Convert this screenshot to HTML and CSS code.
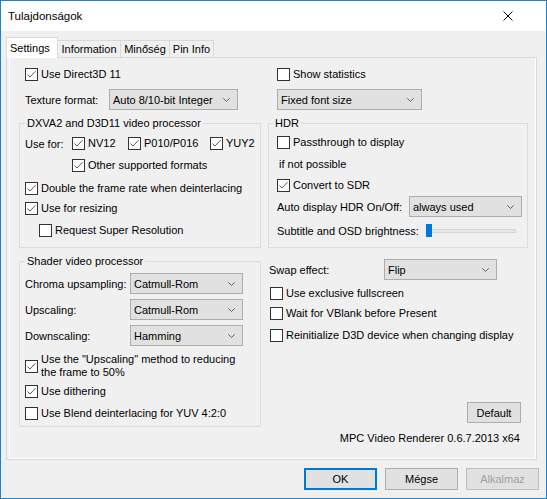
FILE: index.html
```html
<!DOCTYPE html>
<html>
<head>
<meta charset="utf-8">
<link rel="stylesheet" href="styles.css">
</head>
<body>
<div class="win">
  <div class="titlebar">
    <span class="title">Tulajdonságok</span>
    <svg class="close" width="10" height="10" viewBox="0 0 10 10"><path d="M0.5 0.5 L9.5 9.5 M9.5 0.5 L0.5 9.5" stroke="#000" stroke-width="1" fill="none"/></svg>
  </div>
  <div class="client">
    <div class="tabs">
      <div class="tab sel t1">Settings</div>
      <div class="tab t2">Information</div>
      <div class="tab t3">Minőség</div>
      <div class="tab t4">Pin Info</div>
    </div>
    <div class="panel">
      <div class="col left">
        <label class="chk r-d3d"><span class="cb on"><svg viewBox="0 0 11 11"><path d="M1.5 5.5 L4 8 L9.5 2.2"/></svg></span>Use Direct3D 11</label>
        <div class="frow r-tex"><span class="lbl w-tex">Texture format:</span><div class="sel w129">Auto 8/10-bit Integer<svg viewBox="0 0 7 4"><path d="M0.3 0.3 L3.5 3.5 L6.7 0.3"/></svg></div></div>
        <fieldset class="grp g-dxva">
          <legend>DXVA2 and D3D11 video processor</legend>
          <div class="usefor">
            <span class="lbl w-use">Use for:</span>
            <label class="chk i-nv"><span class="cb on"><svg viewBox="0 0 11 11"><path d="M1.5 5.5 L4 8 L9.5 2.2"/></svg></span>NV12</label>
            <label class="chk i-p10"><span class="cb on"><svg viewBox="0 0 11 11"><path d="M1.5 5.5 L4 8 L9.5 2.2"/></svg></span>P010/P016</label>
            <label class="chk"><span class="cb on"><svg viewBox="0 0 11 11"><path d="M1.5 5.5 L4 8 L9.5 2.2"/></svg></span>YUY2</label>
          </div>
          <label class="chk r-other"><span class="cb on"><svg viewBox="0 0 11 11"><path d="M1.5 5.5 L4 8 L9.5 2.2"/></svg></span>Other supported formats</label>
          <label class="chk r-double"><span class="cb on"><svg viewBox="0 0 11 11"><path d="M1.5 5.5 L4 8 L9.5 2.2"/></svg></span>Double the frame rate when deinterlacing</label>
          <label class="chk r-resize"><span class="cb on"><svg viewBox="0 0 11 11"><path d="M1.5 5.5 L4 8 L9.5 2.2"/></svg></span>Use for resizing</label>
          <label class="chk r-super"><span class="cb"></span>Request Super Resolution</label>
        </fieldset>
        <fieldset class="grp g-shader">
          <legend>Shader video processor</legend>
          <div class="frow r-chroma"><span class="lbl w-sh">Chroma upsampling:</span><div class="sel w113">Catmull-Rom<svg viewBox="0 0 7 4"><path d="M0.3 0.3 L3.5 3.5 L6.7 0.3"/></svg></div></div>
          <div class="frow r-up"><span class="lbl w-sh">Upscaling:</span><div class="sel w113">Catmull-Rom<svg viewBox="0 0 7 4"><path d="M0.3 0.3 L3.5 3.5 L6.7 0.3"/></svg></div></div>
          <div class="frow r-up"><span class="lbl w-sh">Downscaling:</span><div class="sel w113">Hamming<svg viewBox="0 0 7 4"><path d="M0.3 0.3 L3.5 3.5 L6.7 0.3"/></svg></div></div>
          <label class="chk two r-half"><span class="cb on"><svg viewBox="0 0 11 11"><path d="M1.5 5.5 L4 8 L9.5 2.2"/></svg></span><span>Use the "Upscaling" method to reducing<br>the frame to 50%</span></label>
          <label class="chk r-dither"><span class="cb on"><svg viewBox="0 0 11 11"><path d="M1.5 5.5 L4 8 L9.5 2.2"/></svg></span>Use dithering</label>
          <label class="chk r-blend"><span class="cb"></span>Use Blend deinterlacing for YUV 4:2:0</label>
        </fieldset>
      </div>
      <div class="col right">
        <label class="chk r-stats"><span class="cb"></span>Show statistics</label>
        <div class="sel w145 r-font">Fixed font size<svg viewBox="0 0 7 4"><path d="M0.3 0.3 L3.5 3.5 L6.7 0.3"/></svg></div>
        <fieldset class="grp g-hdr">
          <legend>HDR</legend>
          <label class="chk r-pass"><span class="cb"></span>Passthrough to display</label>
          <div class="txt r-ifnot">if not possible</div>
          <label class="chk r-sdr"><span class="cb on"><svg viewBox="0 0 11 11"><path d="M1.5 5.5 L4 8 L9.5 2.2"/></svg></span>Convert to SDR</label>
          <div class="frow r-auto"><span class="lbl w-auto">Auto display HDR On/Off:</span><div class="sel w113">always used<svg viewBox="0 0 7 4"><path d="M0.3 0.3 L3.5 3.5 L6.7 0.3"/></svg></div></div>
          <div class="srow r-osd"><span class="lbl w-osd">Subtitle and OSD brightness:</span><div class="slider"><span class="thumb"></span><span class="track"></span></div></div>
        </fieldset>
        <div class="frow r-swap"><span class="lbl w-swap">Swap effect:</span><div class="sel w113">Flip<svg viewBox="0 0 7 4"><path d="M0.3 0.3 L3.5 3.5 L6.7 0.3"/></svg></div></div>
        <label class="chk r-excl"><span class="cb"></span>Use exclusive fullscreen</label>
        <label class="chk r-vbl"><span class="cb"></span>Wait for VBlank before Present</label>
        <label class="chk r-reinit"><span class="cb"></span>Reinitialize D3D device when changing display</label>
        <div class="btn b-default">Default</div>
        <div class="version">MPC Video Renderer 0.6.7.2013 x64</div>
      </div>
    </div>
    <div class="buttons">
      <div class="btn dlg ok">OK</div>
      <div class="btn dlg">Mégse</div>
      <div class="btn dlg dis">Alkalmaz</div>
    </div>
  </div>
</div>
</body>
</html>
```
FILE: styles.css
```css
* { box-sizing: border-box; }
html, body { margin: 0; padding: 0; }
body {
  font-family: "Liberation Sans", Arial, sans-serif;
  font-size: 11px;
  color: #000;
  background: #f0f0f0;
}
.win {
  width: 547px;
  height: 499px;
  border: 1px solid #1883d7;
  background: #f0f0f0;
  overflow: hidden;
}
.titlebar {
  height: 30px;
  background: #fff;
  display: flex;
  align-items: center;
  justify-content: space-between;
  padding: 0 33px 0 7px;
}
.title { font-size: 11.5px; }
.close { display: block; }

.client { padding: 6px 10px 0 5px; }

.tabs {
  display: flex;
  align-items: flex-end;
  height: 20px;
}
.tab {
  height: 17px;
  line-height: 16px;
  text-align: center;
  border-top: 1px solid #d9d9d9;
  border-right: 1px solid #d9d9d9;
  background: #f0f0f0;
}
.tab.sel {
  height: 21px;
  line-height: 18px;
  border: 1px solid #d9d9d9;
  border-bottom: none;
  background: #fff;
  margin-bottom: -1px;
  position: relative;
  z-index: 1;
}
.t1 { width: 52px; }
.t2 { width: 63px; }
.t3 { width: 49px; }
.t4 { width: 44px; }

.panel {
  height: 403px;
  width: 531px;
  border: 1px solid #d9d9d9;
  box-shadow: inset 2px 0 0 #f0f0f0, inset 3px 0 0 #fff, inset -1px -1px 0 #fff;
  display: flex;
  gap: 7px;
  padding-left: 12px;
}
.col { display: flex; flex-direction: column; }
.left { width: 242px; }
.right { width: 260px; }

.chk {
  display: flex;
  align-items: center;
  height: 13px;
  line-height: 13px;
  white-space: nowrap;
}
.cb {
  width: 13px;
  height: 13px;
  border: 1px solid #333;
  background: #fff;
  flex: none;
  margin-right: 3px;
}
.cb svg { display: block; width: 11px; height: 11px; }
.cb svg path { fill: none; stroke: #5a5a5a; stroke-width: 1; }

.frow { display: flex; align-items: center; height: 21px; }
.lbl { flex: none; white-space: nowrap; }
.sel {
  height: 21px;
  background: #e1e1e1;
  border: 1px solid #adadad;
  display: flex;
  align-items: center;
  justify-content: space-between;
  padding: 0 7px 0 3px;
  white-space: nowrap;
  flex: none;
}
.sel svg { width: 7px; height: 4px; display: block; }
.sel svg path { fill: none; stroke: #555; stroke-width: 0.9; }
.w129 { width: 129px; }
.w113 { width: 113px; }
.w145 { width: 145px; }

.w-tex { width: 84px; }
.w-use { width: 47px; }
.w-sh { width: 105px; }
.w-auto { width: 132px; }
.w-osd { width: 149px; }
.w-swap { width: 115px; }

/* left column */
.r-d3d { margin-top: 10px; padding-left: 6px; }
.r-tex { margin-top: 8px; padding-left: 6px; }

.grp {
  margin: 0;
  min-width: 0;
  border: 1px solid #dcdcdc;
}
.grp legend {
  padding: 0 2px;
  line-height: 14px;
  height: 14px;
}
.g-dxva { margin-top: 6px; padding: 0 5px 10px 5px; }
.usefor { display: flex; align-items: center; height: 13px; margin-top: 7px; }
.i-nv { width: 56px; }
.i-p10 { width: 82px; }
.r-other { margin-top: 9px; margin-left: 47px; }
.r-double { margin-top: 10px; }
.r-resize { margin-top: 7px; }
.r-super { margin-top: 9px; padding-left: 14px; }

.g-shader { margin-top: 6px; padding: 0 5px 6px 5px; }
.r-chroma { margin-top: 5px; }
.r-up { margin-top: 5px; }
.chk.two { height: 26px; align-items: center; line-height: 13px; }
.r-half { margin-top: 7px; }
.r-dither { margin-top: 6px; }
.r-blend { margin-top: 9px; }

/* right column */
.r-stats { margin-top: 10px; padding-left: 9px; }
.r-font { margin-top: 8px; margin-left: 9px; }
.g-hdr { margin-top: 6px; padding: 0 8px 10px 4px; }
.g-hdr > .chk, .g-hdr > .frow, .g-hdr > .srow { margin-left: 4px; }
.r-pass { margin-top: 6px; }
.txt { height: 13px; line-height: 13px; }
.r-ifnot { margin-top: 9px; margin-left: 6px; }
.r-sdr { margin-top: 8px; }
.r-auto { margin-top: 4px; }
.srow { display: flex; align-items: center; height: 13px; }
.r-osd { margin-top: 7px; }
.slider { display: flex; align-items: center; height: 13px; }
.thumb { width: 6px; height: 13px; background: #0078d7; flex: none; }
.track {
  width: 84px;
  height: 4px;
  background: #e7e7e7;
  border: 1px solid #d6d6d6;
  border-left: none;
}

.r-swap { margin-top: 11px; padding-left: 1px; }
.r-excl { margin-top: 7px; padding-left: 2px; }
.r-vbl { margin-top: 7px; padding-left: 2px; }
.r-reinit { margin-top: 9px; padding-left: 2px; }

.btn {
  background: #e1e1e1;
  border: 1px solid #adadad;
  display: flex;
  align-items: center;
  justify-content: center;
  white-space: nowrap;
}
.b-default {
  align-self: flex-end;
  width: 54px;
  height: 21px;
  margin-top: 60px;
  margin-right: 7px;
}
.version {
  margin-top: 9px;
  height: 13px;
  line-height: 13px;
  text-align: right;
  padding-right: 8px;
}

.buttons {
  display: flex;
  justify-content: flex-end;
  gap: 8px;
  margin-top: 8px;
  margin-right: -3px;
}
.btn.dlg { width: 73px; height: 22px; }
.btn.ok { border: 2px solid #0078d7; }
.btn.dis { color: #a0a0a0; border-color: #bfbfbf; background: #e1e1e1; }
```
